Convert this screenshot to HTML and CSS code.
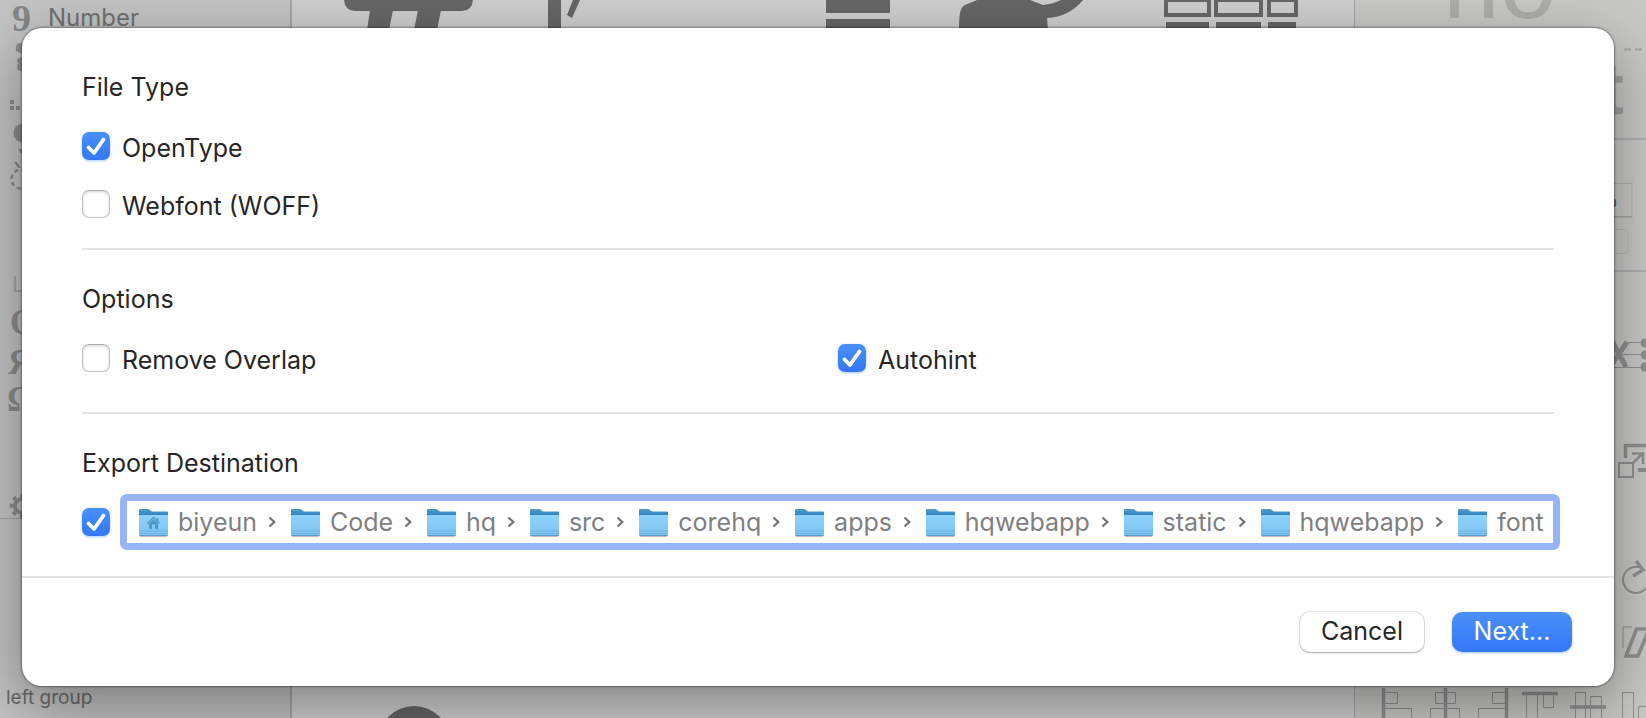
FILE: index.html
```html
<!DOCTYPE html>
<html lang="en">
<head>
<meta charset="utf-8">
<title>Export</title>
<link rel="stylesheet" href="styles.css">
</head>
<body>
<svg class="defs" aria-hidden="true">
  <defs>
    <linearGradient id="front" x1="0" y1="0" x2="0" y2="1">
      <stop offset="0" stop-color="#8ed2fa"/><stop offset="1" stop-color="#7cc4f2"/>
    </linearGradient>
    <linearGradient id="back" x1="0" y1="0" x2="0" y2="1">
      <stop offset="0" stop-color="#4f9fce"/><stop offset="1" stop-color="#2474bd"/>
    </linearGradient>
    <symbol id="folder" viewBox="0 0 29 29">
      <rect x="0.5" y="25" width="28" height="4" rx="1.5" fill="#000" opacity=".25"/>
      <path d="M0 2Q0 1 1 1H9Q10 1 11 2L13 3.500H28Q29 3.500 29 4.500V10H0Z" fill="url(#back)"/>
      <path d="M0 7H29V26.500Q29 28 27.500 28H1.500Q0 28 0 26.500Z" fill="url(#front)"/>
      <path d="M0 23H29M0 25.500H29" stroke="#64abd8" stroke-width=".7"/>
      <path d="M.5 27.500H28.500" stroke="#5d9cc4" stroke-width="1"/>
    </symbol>
    <symbol id="chevron" viewBox="0 0 8 12">
      <path d="M1.500 1.500L6.300 6L1.500 10.500" fill="none" stroke="#737373" stroke-width="2.200"/>
    </symbol>
    <symbol id="tick" viewBox="0 0 28 28">
      <path d="M6.500 15.500L12 21L21.500 7.500" fill="none" stroke="#fff" stroke-width="3.800" stroke-linecap="round" stroke-linejoin="round"/>
    </symbol>
  </defs>
</svg>

<div class="app">
  <aside class="sidebar">
    <div class="category"><span class="category-glyph">9</span><span>Number</span></div>
    <svg class="art" aria-hidden="true">
      <g fill="#8c8c8c">
        <path d="M24 55L16 51Q15 43 20 43L24 44ZM24 56L17 59Q16 65 24 63Z"/>
        <circle cx="21" cy="67" r="4"/>
        <path d="M10 100h4v4h-4zM10 106h4v4h-4zM16 106h4v4h-4z"/>
        <circle cx="23" cy="133" r="9.500"/>
        <path d="M18 149H24V154Q20 154 18 149ZM14 162H17L21 168H18Z"/>
        <circle cx="21" cy="179" r="9.500" fill="none" stroke="#8c8c8c" stroke-width="2.500" stroke-dasharray="4 3.500"/>
        <g class="script-glyph"><text x="10" y="334">O</text><text x="8" y="374">Я</text><text x="7" y="411">Ω</text></g>
        <text class="label-glyph" x="12" y="292">L</text>
        <circle cx="22" cy="506" r="7" fill="none" stroke="#8c8c8c" stroke-width="4"/>
        <circle cx="22" cy="506" r="10.500" fill="none" stroke="#8c8c8c" stroke-width="3.500" stroke-dasharray="4 4.250" stroke-dashoffset="2"/>
      </g>
      <path d="M0 518.500H290" stroke="#a2a2a2"/>
    </svg>
    <div class="group">left group</div>
  </aside>

  <main class="canvas">
    <svg class="art" aria-hidden="true">
      <g transform="translate(-292 0)" fill="#666">
        <path d="M344 0H473Q472 11 462 11H355Q345 11 344 0Z"/>
        <path d="M370 10H393L389 30H367ZM418 10H441L437 30H414Z"/>
        <rect x="548" y="0" width="13" height="30"/>
        <path d="M573 0H580L572 18L567 15Z"/>
        <rect x="826" y="0" width="64" height="13"/><rect x="826" y="19" width="64" height="12"/>
        <path d="M959 30Q959 18 960 13Q961 7 965 5L977 0H1030L1043 5Q1053 4 1061 0H1083Q1069 17 1047 18L1048 30Z"/>
        <g fill="none" stroke="#666" stroke-width="4">
          <rect x="1166" y="0" width="43" height="15"/><rect x="1216" y="0" width="45" height="15"/><rect x="1269" y="0" width="27" height="15"/>
        </g>
        <path d="M1166 22h43v8h-43zM1216 22h45v8h-45zM1268 22h28v8h-28z"/>
        <circle cx="414" cy="742" r="36"/>
      </g>
    </svg>
  </main>

  <aside class="inspector">
    <svg class="art" aria-hidden="true">
      <g transform="translate(-1355 0)">
        <text class="preview" x="1443" y="18">no</text>
        <path d="M1624 49.500H1631M1635 49.500H1642" stroke="#a6a6a6" stroke-width="2"/>
        <text class="preview-bold" x="1624" y="114">t</text>
        <path d="M1600 139H1646M1600 271H1646" stroke="#b0b1b3" stroke-width="2"/>
        <rect x="1580" y="183.500" width="52" height="33" fill="#c8c8c7" stroke="#b0b0b0"/>
        <path d="M1580 217H1632" stroke="#9a9a9a"/>
        <text class="field-glyph" x="1617" y="208">o</text>
        <rect x="1590" y="229.500" width="38" height="24" rx="4" fill="none" stroke="#b8b8b6"/>
        <g fill="none" stroke="#909090">
          <path d="M1627 342L1612 364M1612 341L1626 367" stroke-width="5"/>
          <path d="M1624 342.500H1642M1622 354.500H1642M1614 367.500H1642"/>
          <g fill="#909090" stroke="none"><circle cx="1645" cy="343" r="4.500"/><circle cx="1645" cy="355" r="4.500"/><circle cx="1645" cy="367" r="4.500"/></g>
          <path d="M1625.500 458V445.500H1646" stroke-width="3.500"/>
          <rect x="1619" y="463" width="14" height="14" stroke-width="2"/>
          <path d="M1633 463L1643 453M1632 453.500H1643V464" stroke-width="2.500"/>
          <path d="M1638 470H1646" stroke-width="4"/>
          <path d="M1640 567.500A13 13 0 1 0 1649 581" stroke-width="2"/>
          <path d="M1636 561L1643 570L1633 576" stroke-width="3.500"/>
          <path d="M1623 648V627H1632"/>
          <path d="M1650 629H1636.500L1626 656H1638L1649 629" stroke-width="3.500"/>
          <path d="M1383.500 688V718M1445.500 688V718M1506.500 688V718M1522 693.500H1558M1570 707H1606" stroke-width="3.500"/>
          <path d="M1385 692.500H1397.500V703.500H1385M1385 708.500H1411.500V720M1435.500 692.500H1455.500V703.500H1435.500ZM1430.500 720V708.500H1459.500V720M1505 692.500H1492.500V703.500H1505M1505 708.500H1478.500V720M1526.500 720V695M1537.500 720V695M1543.500 695V707.500H1553.500V695M1575.500 720V692.500H1585.500V720M1590.500 720V696.500H1601.500V720M1622.500 720V692.500H1633.500V720M1638.500 720V706.500H1650"/>
        </g>
      </g>
    </svg>
  </aside>
</div>

<form class="sheet" role="dialog" aria-label="Export">
  <section class="section file-types">
    <h2>File Type</h2>
    <div class="stack">
      <label class="option"><span class="check"><input type="checkbox" checked><svg><use href="#tick"/></svg></span>OpenType</label>
      <label class="option"><span class="check"><input type="checkbox"><svg><use href="#tick"/></svg></span>Webfont (WOFF)</label>
    </div>
  </section>
  <section class="section options">
    <h2>Options</h2>
    <div class="columns">
      <label class="option"><span class="check"><input type="checkbox"><svg><use href="#tick"/></svg></span>Remove Overlap</label>
      <label class="option"><span class="check"><input type="checkbox" checked><svg><use href="#tick"/></svg></span>Autohint</label>
    </div>
  </section>
  <section class="section destination">
    <h2 id="dest">Export Destination</h2>
    <div class="path-row">
      <span class="check"><input type="checkbox" checked aria-labelledby="dest"><svg><use href="#tick"/></svg></span>
      <div class="path" tabindex="0" aria-labelledby="dest">
        <span class="crumb"><svg class="folder"><use href="#folder"/><path d="M8.500 15.500L14.500 9.500L20.500 15.500M18.500 13V10" fill="none" stroke="#4b9ccb" stroke-width="1.500"/><path d="M10 15.500L14.500 11.500L19 15.500V21H16V16.500H13V21H10Z" fill="#4b9ccb"/></svg>biyeun</span>
        <svg class="chevron"><use href="#chevron"/></svg>
        <span class="crumb"><svg class="folder"><use href="#folder"/></svg>Code</span>
        <svg class="chevron"><use href="#chevron"/></svg>
        <span class="crumb"><svg class="folder"><use href="#folder"/></svg>hq</span>
        <svg class="chevron"><use href="#chevron"/></svg>
        <span class="crumb"><svg class="folder"><use href="#folder"/></svg>src</span>
        <svg class="chevron"><use href="#chevron"/></svg>
        <span class="crumb"><svg class="folder"><use href="#folder"/></svg>corehq</span>
        <svg class="chevron"><use href="#chevron"/></svg>
        <span class="crumb"><svg class="folder"><use href="#folder"/></svg>apps</span>
        <svg class="chevron"><use href="#chevron"/></svg>
        <span class="crumb"><svg class="folder"><use href="#folder"/></svg>hqwebapp</span>
        <svg class="chevron"><use href="#chevron"/></svg>
        <span class="crumb"><svg class="folder"><use href="#folder"/></svg>static</span>
        <svg class="chevron"><use href="#chevron"/></svg>
        <span class="crumb"><svg class="folder"><use href="#folder"/></svg>hqwebapp</span>
        <svg class="chevron"><use href="#chevron"/></svg>
        <span class="crumb"><svg class="folder"><use href="#folder"/></svg>font</span>
      </div>
    </div>
  </section>
  <footer class="actions">
    <button type="button" class="button">Cancel</button>
    <button type="submit" class="button primary">Next...</button>
  </footer>
</form>
</body>
</html>
```

FILE: styles.css
```css
* {
  box-sizing: border-box;
}

body {
  margin: 0;
  overflow: hidden;
  background: #c8c8c8;
  color: #262626;
  font: 25px/32px Inter, "Liberation Sans", sans-serif;
}

.defs {
  position: absolute;
  width: 0;
  height: 0;
}

/* Window behind the sheet */
.app {
  display: grid;
  grid-template-columns: 292px 1fr 291px;
  height: 100vh;
}

.app > * {
  display: grid;
  overflow: hidden;
}

.art {
  grid-area: 1 / 1;
  width: 100%;
  height: 100%;
}

.sidebar {
  background: #c3c3c3;
  border-right: 2px solid #a6a6a6;
  color: #707070;
}

.canvas {
  background: #cecece;
}

.inspector {
  background: #c8c8c6;
  box-shadow: -1px 0 #a5a5a5;
}

.category {
  grid-area: 1 / 1;
  display: flex;
  align-self: start;
  gap: 17px;
  padding-left: 12px;
  font-size: 24px;
  line-height: 36px;
}

.category-glyph {
  color: #868686;
  font: bold 38px/36px "Liberation Serif", serif;
}

.group {
  grid-area: 1 / 1;
  align-self: end;
  padding-left: 6px;
  padding-bottom: 4px;
  color: #6c6c6c;
  font-size: 19px;
  line-height: 32px;
}

.script-glyph {
  font: bold 35px "Liberation Serif", serif;
}

.label-glyph {
  fill: #a4a4a4;
  font: 22px Inter, sans-serif;
}

.preview {
  fill: #adadac;
  font: 102px "Liberation Sans", sans-serif;
}

.preview-bold {
  fill: #a2a2a2;
  font: bold 72px "Liberation Sans", sans-serif;
  text-anchor: end;
}

.field-glyph {
  fill: #555;
  font: 18px Inter, sans-serif;
  text-anchor: end;
}

/* Export sheet */
.sheet {
  position: absolute;
  top: 28px;
  left: 22px;
  right: 32px;
  border-radius: 20px;
  background: #fff;
  box-shadow: 0 0 2px 1px rgba(0, 0, 0, .36), 0 20px 60px rgba(0, 0, 0, .38);
}

.section {
  margin: 0 60px;
  padding: 33px 0 26px;
  border-bottom: 2px solid #e4e4e4;
}

.file-types {
  padding-top: 43px;
}

.options {
  padding-bottom: 36px;
}

.destination {
  margin: 0;
  padding-left: 60px;
  padding-right: 54px;
}

h2 {
  margin: 0 0 29px;
  font: inherit;
}

.destination h2 {
  margin-bottom: 15px;
}

.stack {
  display: grid;
  gap: 26px;
}

.columns {
  display: grid;
  grid-template-columns: 1fr 1fr;
  column-gap: 40px;
}

.option {
  display: flex;
  gap: 12px;
}

.check {
  display: grid;
  flex: none;
  width: 28px;
  height: 28px;
}

.check > * {
  grid-area: 1 / 1;
  width: 28px;
  height: 28px;
}

.check svg {
  display: none;
  pointer-events: none;
}

.check input {
  margin: 0;
  appearance: none;
  border: 1px solid #c2c2c2;
  border-top-color: #adadad;
  border-radius: 7px;
  background: #fff;
  box-shadow: inset 0 1px 3px rgba(0, 0, 0, .18);
}

.check input:checked {
  border: 0;
  background: linear-gradient(#4a90f8, #3377f7);
  box-shadow: 0 1px 3px rgba(51, 119, 247, .4);
}

.check input:checked + svg {
  display: block;
}

.path-row {
  display: flex;
  align-items: center;
  gap: 10px;
}

.path {
  display: flex;
  flex: 1;
  align-items: center;
  justify-content: space-between;
  padding: 5px 9px 5px 12px;
  border: 7px solid #98b3f6;
  border-radius: 7px;
  color: #7f7f7f;
  white-space: nowrap;
}

.crumb {
  display: flex;
  align-items: center;
  gap: 10px;
}

.folder {
  width: 29px;
  height: 29px;
}

.chevron {
  width: 8px;
  height: 12px;
  margin-right: 4px;
}

.actions {
  display: flex;
  justify-content: flex-end;
  gap: 28px;
  padding: 34px 42px;
}

.button {
  min-width: 120px;
  height: 40px;
  padding: 0 21px 2px;
  border: 0;
  border-radius: 10px;
  background: #fff;
  box-shadow: 0 0 0 1px rgba(0, 0, 0, .1), 0 1px 2px rgba(0, 0, 0, .25);
  color: #262626;
  font: inherit;
}

.primary {
  background: linear-gradient(#4a90f8, #3377f7);
  box-shadow: 0 1px 3px rgba(51, 119, 247, .4);
  color: #fff;
}
```
